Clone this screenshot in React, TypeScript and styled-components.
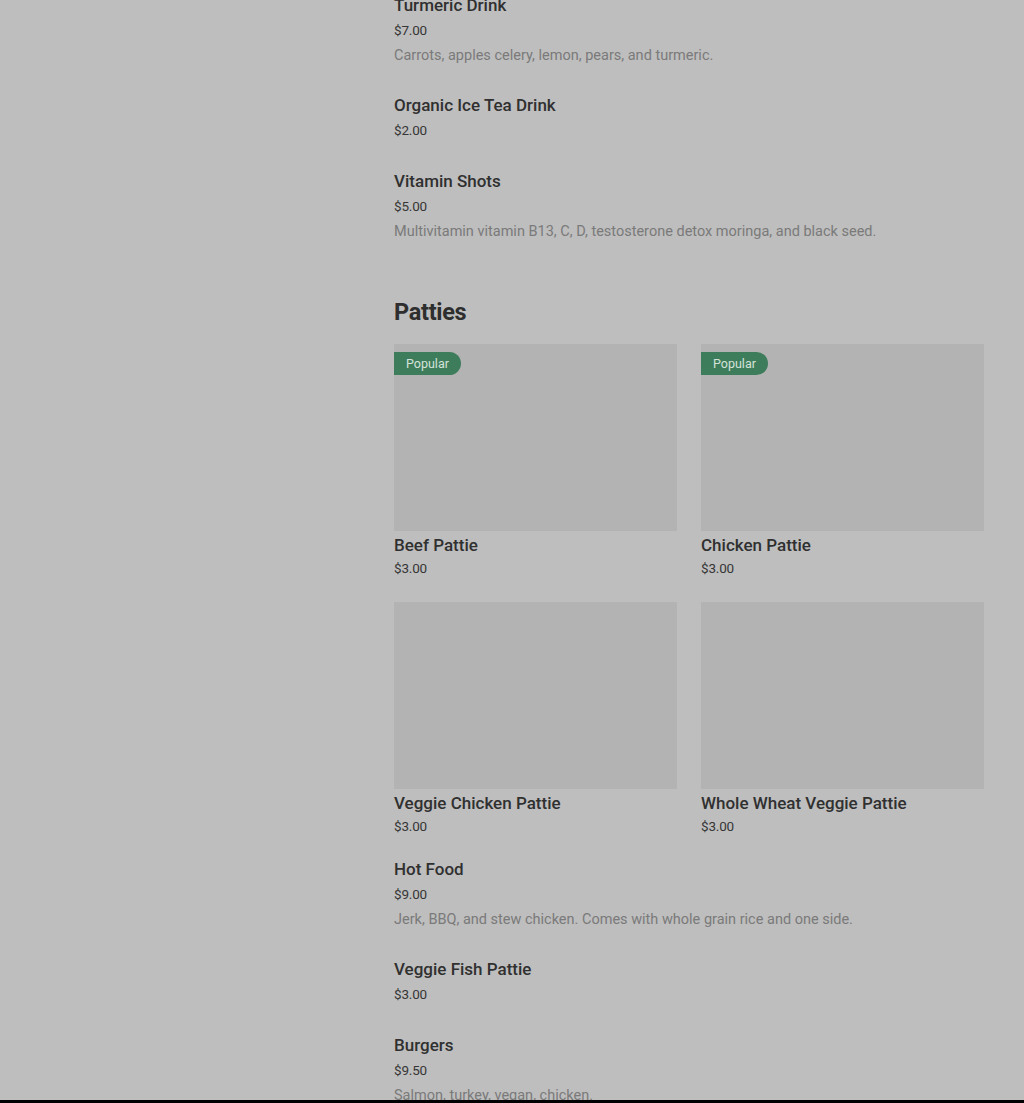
import styled, { createGlobalStyle } from "styled-components";

const GlobalStyle = createGlobalStyle`
  html, body {
    margin: 0;
    padding: 0;
    background: #bebebe;
    font-family: Roboto, "Liberation Sans", Arial, sans-serif;
  }
`;

interface IMenuItem {
  title: string;
  price: string;
  description?: string;
  popular?: boolean;
}

const drinks: IMenuItem[] = [
  {
    title: "Turmeric Drink",
    price: "$7.00",
    description: "Carrots, apples celery, lemon, pears, and turmeric.",
  },
  { title: "Organic Ice Tea Drink", price: "$2.00" },
  {
    title: "Vitamin Shots",
    price: "$5.00",
    description:
      "Multivitamin vitamin B13, C, D, testosterone detox moringa, and black seed.",
  },
];

const patties: IMenuItem[] = [
  { title: "Beef Pattie", price: "$3.00", popular: true },
  { title: "Chicken Pattie", price: "$3.00", popular: true },
  { title: "Veggie Chicken Pattie", price: "$3.00" },
  { title: "Whole Wheat Veggie Pattie", price: "$3.00" },
];

const more: IMenuItem[] = [
  {
    title: "Hot Food",
    price: "$9.00",
    description:
      "Jerk, BBQ, and stew chicken. Comes with whole grain rice and one side.",
  },
  { title: "Veggie Fish Pattie", price: "$3.00" },
  {
    title: "Burgers",
    price: "$9.50",
    description: "Salmon, turkey, vegan, chicken.",
  },
];

const Page = styled.div`
  height: 1100px;
  overflow: hidden;
  display: flex;
`;

const Sidebar = styled.aside`
  width: 394px;
  flex-shrink: 0;
`;

const Main = styled.main`
  width: 590px;
  margin-top: -8px;
  display: flex;
  flex-direction: column;
`;

const List = styled.div`
  display: flex;
  flex-direction: column;
  gap: 26px;
`;

const Item = styled.div`
  display: flex;
  flex-direction: column;
`;

const ItemTitle = styled.div`
  padding-top: 1px;
  font-size: 17px;
  font-weight: 500;
  color: #303030;
  line-height: 25px;
  white-space: nowrap;
`;

const Price = styled.div<{ $tight?: boolean }>`
  font-size: 13.5px;
  color: #363636;
  line-height: ${(p) => (p.$tight ? "22px" : "24px")};
  letter-spacing: -0.2px;
`;

const Description = styled.div`
  padding-top: 2px;
  margin-bottom: -2px;
  font-size: 14.5px;
  color: #7a7a7a;
  line-height: 24px;
  white-space: nowrap;
`;

const SectionTitle = styled.h2`
  margin: 54px 0 16px;
  font-size: 23.5px;
  font-weight: 700;
  line-height: 32px;
  color: #2e2e2e;
  letter-spacing: -0.3px;
`;

const Grid = styled.div`
  display: grid;
  grid-template-columns: repeat(2, 283px);
  column-gap: 24px;
  row-gap: 23px;
  margin-bottom: 19px;
`;

const Card = styled.div`
  display: flex;
  flex-direction: column;
`;

const CardImage = styled.div`
  position: relative;
  height: 187px;
  background: #b3b3b3;
`;

const Badge = styled.span`
  position: absolute;
  top: 8px;
  left: 0;
  height: 23px;
  padding: 0 12px;
  display: flex;
  align-items: center;
  background: #3e7d5c;
  color: #d4e3d9;
  font-size: 12.5px;
  border-radius: 0 12px 12px 0;
`;

const CardTitle = styled(ItemTitle)`
  padding-top: 0;
  margin-top: 2px;
  line-height: 24px;
`;

const BottomEdge = styled.div`
  position: fixed;
  left: 0;
  right: 0;
  top: 1100px;
  height: 3px;
  background: #000;
`;

function MenuList({ items }: { items: IMenuItem[] }) {
  return (
    <List>
      {items.map((item) => (
        <Item key={item.title}>
          <ItemTitle>{item.title}</ItemTitle>
          <Price>{item.price}</Price>
          {item.description && <Description>{item.description}</Description>}
        </Item>
      ))}
    </List>
  );
}

export default function App() {
  return (
    <>
      <GlobalStyle />
      <Page>
        <Sidebar />
        <Main>
          <MenuList items={drinks} />
          <SectionTitle>Patties</SectionTitle>
          <Grid>
            {patties.map((item) => (
              <Card key={item.title}>
                <CardImage>{item.popular && <Badge>Popular</Badge>}</CardImage>
                <CardTitle>{item.title}</CardTitle>
                <Price $tight>{item.price}</Price>
              </Card>
            ))}
          </Grid>
          <MenuList items={more} />
        </Main>
      </Page>
      <BottomEdge />
    </>
  );
}
